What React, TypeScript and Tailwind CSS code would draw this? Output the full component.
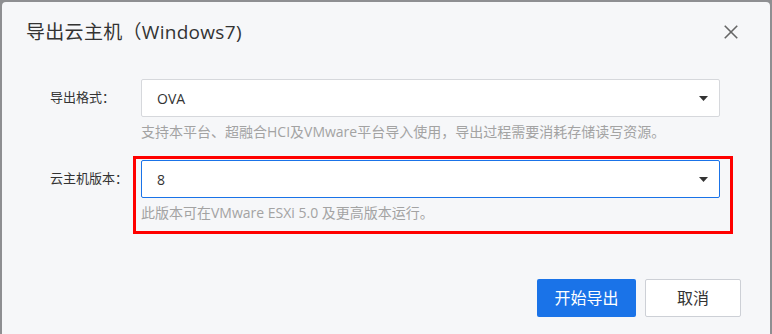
function Caret() {
  return (
    <svg width="9" height="5" viewBox="0 0 9 5" className="shrink-0">
      <polygon points="0,0 9,0 4.5,5" fill="#333" />
    </svg>
  );
}

function CloseIcon() {
  return (
    <svg width="14" height="14" viewBox="0 0 14 14" className="shrink-0">
      <line x1="0.75" y1="0.75" x2="13.25" y2="13.25" stroke="#666" strokeWidth="1.6" />
      <line x1="13.25" y1="0.75" x2="0.75" y2="13.25" stroke="#666" strokeWidth="1.6" />
    </svg>
  );
}

export default function App() {
  const font = { fontFamily: '"Open Sans", "Noto Sans CJK SC", sans-serif' };

  return (
    <div className="w-[772px] h-[334px] bg-[#8e8f92] overflow-hidden" style={font}>
      <div className="ml-[2px] mt-[2px] w-[768px] h-[350px] rounded-[4px] bg-[#f6f7f9] flex flex-col">
        {/* Header */}
        <div className="h-[60px] flex items-center justify-between pl-[24px] pr-[32px] shrink-0">
          <h2 className="text-[19px] text-[#333] leading-none tracking-[0.3px]">导出云主机（Windows7)</h2>
          <CloseIcon />
        </div>

        {/* Body */}
        <div className="pt-[17px] pl-[48px] pr-[50px] flex flex-col">
          {/* Row 1 */}
          <div className="flex">
            <div className="w-[91px] h-[38px] flex items-center text-[13px] text-[#333] shrink-0">导出格式：</div>
            <div className="flex-1 flex flex-col">
              <div className="h-[38px] bg-white border border-[#d6d8dc] rounded-[2px] flex items-center justify-between pl-[15px] pr-[11px]">
                <span className="text-[14px] text-[#333]">OVA</span>
                <Caret />
              </div>
              <div className="mt-[5px] text-[14px] leading-[20px] text-[#a3a3a3]">
                支持本平台、超融合HCI及VMware平台导入使用，导出过程需要消耗存储读写资源。
              </div>
            </div>
          </div>

          {/* Row 2 */}
          <div className="flex mt-[18px]">
            <div className="w-[91px] h-[38px] flex items-center text-[13px] text-[#333] shrink-0">云主机版本：</div>
            <div className="flex-1 flex flex-col relative">
              <div className="h-[38px] bg-white border border-[#1a73e8] rounded-[2px] flex items-center justify-between pl-[15px] pr-[11px]">
                <span className="text-[14px] text-[#333]">8</span>
                <Caret />
              </div>
              <div className="mt-[5px] text-[14px] leading-[20px] text-[#a3a3a3]">
                此版本可在VMware ESXi 5.0 及更高版本运行。
              </div>
              {/* annotation box */}
              <div className="absolute left-[-8px] right-[-13px] top-[-4px] h-[78px] border-[3px] border-[#ff0000] pointer-events-none" />
            </div>
          </div>
        </div>

        {/* Footer */}
        <div className="mt-[56px] flex justify-end gap-[9px] pr-[29px]">
          <button className="w-[99px] h-[38px] rounded-[2px] bg-[#1a73e8] text-white text-[16px]">开始导出</button>
          <button className="w-[96px] h-[38px] rounded-[2px] bg-white border border-[#cdd0d6] text-[#333] text-[16px]">取消</button>
        </div>
      </div>
    </div>
  );
}
